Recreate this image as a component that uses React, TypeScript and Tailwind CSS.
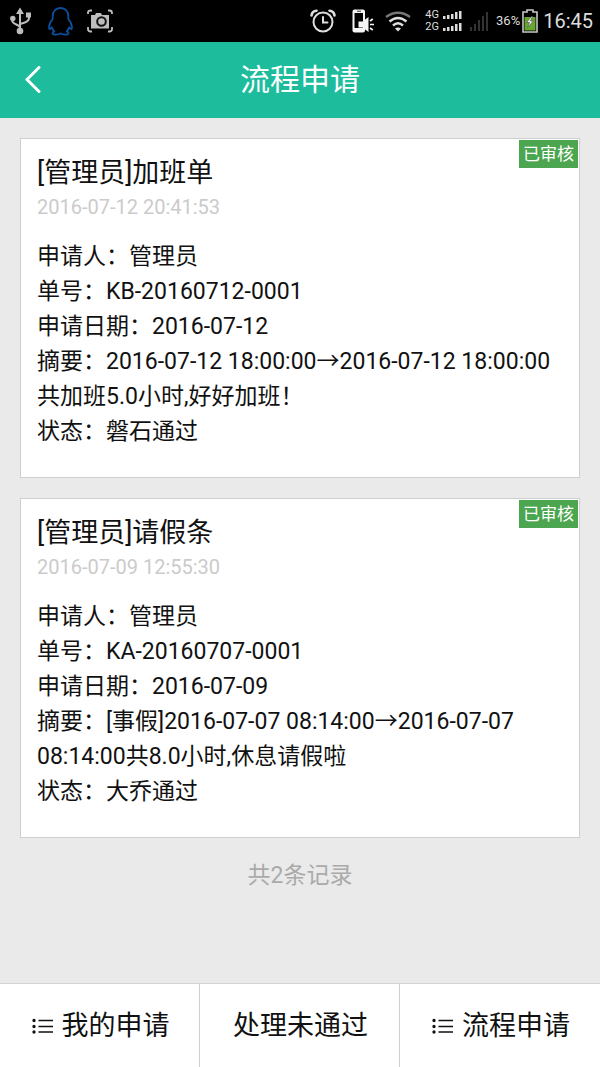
import React from 'react'

interface Application {
  title: string
  time: string
  status: string
  lines: string[]
}

const applications: Application[] = [
  {
    title: '[管理员]加班单',
    time: '2016-07-12 20:41:53',
    status: '已审核',
    lines: [
      '申请人：管理员',
      '单号：KB-20160712-0001',
      '申请日期：2016-07-12',
      '摘要：2016-07-12 18:00:00→2016-07-12 18:00:00共加班5.0小时,好好加班！',
      '状态：磐石通过'
    ]
  },
  {
    title: '[管理员]请假条',
    time: '2016-07-09 12:55:30',
    status: '已审核',
    lines: [
      '申请人：管理员',
      '单号：KA-20160707-0001',
      '申请日期：2016-07-09',
      '摘要：[事假]2016-07-07 08:14:00→2016-07-07 08:14:00共8.0小时,休息请假啦',
      '状态：大乔通过'
    ]
  }
]

const tabs = [
  { label: '我的申请', icon: true },
  { label: '处理未通过', icon: false },
  { label: '流程申请', icon: true }
]

function UsbIcon() {
  return (
    <svg width="22" height="28" viewBox="0 0 22 28" fill="none" stroke="#bdbdbd" strokeWidth="2">
      <path d="M10 6v18M10 21c0-4-8-3-8-8v-1M10 18c0-3 9-1 9-7v-1" />
      <path d="M10 0.500l4 6.500H6z" fill="#bdbdbd" stroke="none" />
      <circle cx="10" cy="24" r="3.300" fill="#bdbdbd" stroke="none" />
      <circle cx="2.800" cy="11.500" r="2.700" fill="#bdbdbd" stroke="none" />
      <path d="M16 5.500h5v5h-5z" fill="#bdbdbd" stroke="none" />
    </svg>
  )
}

function PenguinIcon() {
  return (
    <svg width="25" height="29" viewBox="0 0 25 29" fill="none" stroke="#0b4f9f" strokeWidth="1.800" strokeLinejoin="round">
      <path d="M12.500 1C7.500 1 4.700 4.500 4.700 9v3C2.500 14.500 1 17.500 1 20.500c0 2 1 2.200 2 .8l.8-1c.5 1.700 1.300 3 2.500 4.100-1.300.5-2 1.100-1.800 2 .4 1.500 6 1.500 8 0 2 1.500 7.600 1.500 8 0 .2-.9-.5-1.500-1.800-2 1.200-1.100 2-2.400 2.500-4.100l.8 1c1 1.400 2 1.200 2-.8 0-3-1.500-6-3.700-8.500V9C20.300 4.500 17.500 1 12.500 1z" />
    </svg>
  )
}

function ScreenshotIcon() {
  return (
    <svg width="26" height="24" viewBox="0 0 26 24" fill="none">
      <path d="M1 5V3.500Q1 1.500 3.500 1.500H5M21 1.500h1.500Q25 1.500 25 4v1M25 18v2q0 2.500-2.500 2.500H21M5 22.500H3.500Q1 22.500 1 20v-2" stroke="#bdbdbd" strokeWidth="1.800" />
      <path d="M5 6h3l1-2h5l1 2h7v13.500H4V6z" fill="#bdbdbd" />
      <circle cx="14.500" cy="12.500" r="4.300" fill="#bdbdbd" stroke="#111" strokeWidth="2" />
    </svg>
  )
}

function AlarmIcon() {
  return (
    <svg width="26" height="24" viewBox="0 0 26 24" fill="none" stroke="#dedede" strokeLinecap="round">
      <circle cx="13" cy="13" r="9.500" strokeWidth="2" />
      <path d="M13 8v5.500h4.500" strokeWidth="2" />
      <path d="M1.500 6.500Q2 2 6.500 1.700M24.500 6.500Q24 2 19.500 1.700" strokeWidth="2.600" />
    </svg>
  )
}

function PhoneSoundIcon() {
  return (
    <svg width="23" height="24" viewBox="0 0 23 24" fill="none">
      <rect x="0.500" y="0.500" width="12.500" height="23" rx="2" fill="#f5f5f5" />
      <path d="M2.500 4h8.500v15H2.500z" fill="#000" />
      <path d="M5 2.200h4" stroke="#333" />
      <path d="M6.500 12.500h4L16.500 8v15l-6-4.500h-4z" fill="#f5f5f5" />
      <path d="M18 12l2.800-2M18 15.500h4M18 19l2.800 2" stroke="#f5f5f5" strokeWidth="1.700" />
    </svg>
  )
}

function WifiIcon() {
  return (
    <svg width="26" height="21" viewBox="0 0 26 21" fill="none" strokeWidth="2.400">
      <path d="M1 6Q13-2.500 25 6" stroke="#777" />
      <path d="M4.500 10.500Q13 3.500 21.500 10.500" stroke="#dedede" />
      <path d="M8 14.500Q13 10 18 14.500" stroke="#dedede" />
      <path d="M10 17.500q3-2 6 0L13 20.500z" fill="#dedede" />
    </svg>
  )
}

function SmallBars() {
  return (
    <svg width="19" height="8" viewBox="0 0 19 8" fill="#dedede">
      <path d="M0 5h2.500v3H0zM4 4h2.500v4H4zM8 3h2.500v5H8zM12 1h2.500v7H12zM16 0h2.500v8H16z" />
    </svg>
  )
}

function SignalIcon() {
  return (
    <svg width="18" height="19" viewBox="0 0 18 19" fill="#333">
      <path d="M0 15h2v4H0zM4 12h2v7H4zM8 8h2v11H8zM12 4h2v15h-2zM16 0h2v19h-2z" />
    </svg>
  )
}

function BatteryIcon() {
  return (
    <svg width="16" height="24" viewBox="0 0 16 24">
      <path d="M5 3V1h6v2h4v20H1V3z" fill="#000" stroke="#c8c8c8" strokeWidth="1.600" />
      <path d="M2.500 8h11v13.500h-11z" fill="#68a72f" />
      <path d="M9.500 7.500L4.500 13.500h3L5.500 18.500l6-6.500h-3l2-4.500z" fill="#f2f2f2" stroke="#555" strokeWidth="0.700" />
    </svg>
  )
}

function ListIcon() {
  return (
    <svg width="22" height="16" viewBox="0 0 22 16" fill="none" stroke="#111">
      <path d="M6.500 2.500h14.500M6.500 8.500h14.500M6.500 14h14.500" strokeWidth="1.700" />
      <path d="M2 2.500h.01M2 8.500h.01M2 14h.01" strokeWidth="3.300" strokeLinecap="round" />
    </svg>
  )
}

function StatusBar() {
  return (
    <div className="flex h-[42px] items-center justify-between bg-black pl-[10px] pr-[7px] text-[#dedede]">
      <div className="flex items-center">
        <UsbIcon />
        <div className="ml-4"><PenguinIcon /></div>
        <div className="ml-[14px]"><ScreenshotIcon /></div>
      </div>
      <div className="flex items-center">
        <AlarmIcon />
        <div className="ml-4"><PhoneSoundIcon /></div>
        <div className="ml-[10px]"><WifiIcon /></div>
        <div className="ml-[14px] text-[11px] leading-[12px]">
          <div className="flex items-center gap-1">4G<SmallBars /></div>
          <div className="flex items-center gap-1">2G<SmallBars /></div>
        </div>
        <div className="ml-2"><SignalIcon /></div>
        <span className="ml-2 text-[13px]">36%</span>
        <div className="ml-[2px]"><BatteryIcon /></div>
        <span className="ml-[5px] text-[20px] leading-6">16:45</span>
      </div>
    </div>
  )
}

function ApplicationCard({ item }: { item: Application }) {
  return (
    <article className="relative border border-[#cfcfcf] bg-white px-4 pb-7 pt-4">
      <span className="absolute right-px top-px bg-[#4ba64f] px-1 text-[17px] leading-[28px] text-white">
        {item.status}
      </span>
      <h2 className="text-[27px] leading-[36px]">{item.title}</h2>
      <time className="block text-[20px] leading-[32px] text-[#cbcbcb]">{item.time}</time>
      <div className="mt-4 text-[23px] leading-[35px]">
        {item.lines.map((line) => (
          <p key={line}>{line}</p>
        ))}
      </div>
    </article>
  )
}

export default function App() {
  return (
    <div className="flex min-h-screen flex-col bg-[#eaeaea] font-[Roboto,'Noto_Sans_CJK_SC',sans-serif] text-[#111]">
      <StatusBar />
      <header className="relative flex h-[76px] items-center justify-center bg-[#1cbc9c] text-white">
        <button type="button" aria-label="返回" className="absolute left-6 flex h-10 w-8 items-center">
          <svg width="18" height="28" viewBox="0 0 18 28" fill="none" stroke="currentColor" strokeWidth="3" strokeLinecap="round" strokeLinejoin="round">
            <path d="M15 1.500L3 13.500l12 12" />
          </svg>
        </button>
        <h1 className="text-[30px] leading-[40px]">流程申请</h1>
      </header>

      <main className="flex-1 p-5">
        <div className="flex flex-col gap-5">
          {applications.map((item) => (
            <ApplicationCard key={item.title} item={item} />
          ))}
        </div>
        <p className="mt-5 text-center text-[23px] leading-[35px] text-[#aaa]">共2条记录</p>
      </main>

      <nav className="grid h-[84px] grid-cols-3 divide-x divide-[#cfcfcf] border-t border-[#d5d5d5] bg-white">
        {tabs.map((tab) => (
          <button key={tab.label} type="button" className="flex items-center justify-center gap-2 pl-[2px] text-[27px] leading-[36px]">
            {tab.icon && <ListIcon />}
            {tab.label}
          </button>
        ))}
      </nav>
    </div>
  )
}
